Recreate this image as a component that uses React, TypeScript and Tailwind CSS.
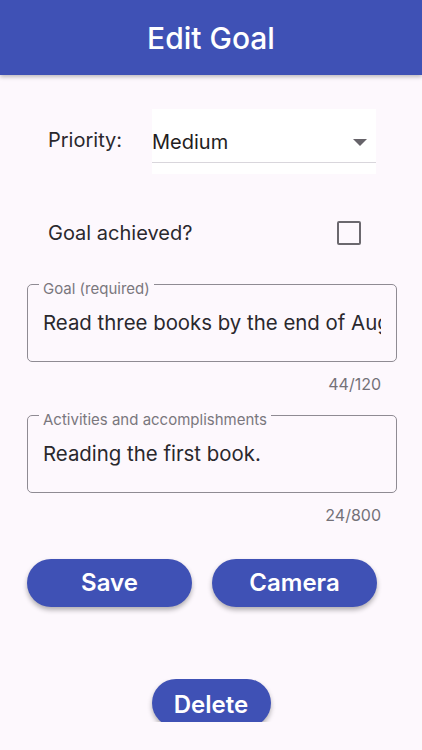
import React from "react";

const font = { fontFamily: "Inter, 'Noto Sans', sans-serif" };

function OutlinedField({ label, value, counter }: { label: string; value: string; counter: string }) {
  return (
    <div className="ml-[27px] w-[370px]">
      <div className="relative h-[78px] rounded-[5px] border border-[#8f8b93]">
        <span className="absolute left-[11px] top-[-5px] bg-[#fdf8fd] px-[4px] text-[15px] leading-[17px] text-[#7a777d]">
          {label}
        </span>
        <div className="px-[15px] pt-[24px]">
          <div className="overflow-hidden whitespace-nowrap text-[20.4px] leading-[28px] text-[#2a282d]">
            {value}
          </div>
        </div>
      </div>
      <div className="mt-[12px] h-[20px] pr-[16px] text-right text-[16px] leading-[20px] text-[#747178]">
        {counter}
      </div>
    </div>
  );
}

function PillButton({ children, className = "" }: { children: React.ReactNode; className?: string }) {
  return (
    <button
      className={
        "flex h-[48px] items-center justify-center rounded-full bg-[#3f51b5] text-[24px] font-semibold leading-none text-white shadow-[0_3px_5px_rgba(0,0,0,0.3)] " +
        className
      }
    >
      {children}
    </button>
  );
}

export default function App() {
  return (
    <div className="h-[750px] w-[422px] overflow-hidden bg-[#fdf8fd]" style={font}>
      <header className="relative z-10 flex h-[75px] items-center justify-center bg-[#3f51b5] shadow-[0_2px_4px_rgba(0,0,0,0.25)]">
        <h1 className="text-[30px] font-medium leading-none text-white">Edit Goal</h1>
      </header>

      <div className="h-[647px] overflow-hidden">
        {/* Priority row */}
        <div className="mt-[34px] flex items-start pl-[48px]">
          <div className="mt-[17px] w-[104px] text-[20px] leading-[28px] text-[#2a282d]">Priority:</div>
          <div className="h-[65px] w-[224px] bg-white">
            <div className="flex h-[54px] items-start border-b border-[#d9d6dc] pt-[19px]">
              <span className="flex-1 text-[20px] leading-[28px] text-[#1f1d22]">Medium</span>
              <span className="flex h-[28px] items-center pr-[9px]">
                <svg width="14" height="7" viewBox="0 0 14 7">
                  <polygon points="0,0 14,0 7,7" fill="#666369" />
                </svg>
              </span>
            </div>
          </div>
        </div>

        {/* Goal achieved row */}
        <div className="mt-[45px] flex h-[28px] items-center pl-[48px] pr-[61px]">
          <span className="flex-1 text-[20px] leading-[28px] text-[#2a282d]">Goal achieved?</span>
          <span className="block h-[24px] w-[24px] rounded-[2px] border-[2.5px] border-[#6b686e]" />
        </div>

        <div className="mt-[37px]">
          <OutlinedField label="Goal (required)" value="Read three books by the end of August." counter="44/120" />
        </div>
        <div className="mt-[21px]">
          <OutlinedField label="Activities and accomplishments" value="Reading the first book." counter="24/800" />
        </div>

        <div className="mt-[34px] flex gap-[20px] pl-[27px]">
          <PillButton className="w-[165px]">Save</PillButton>
          <PillButton className="w-[165px]">Camera</PillButton>
        </div>

        <div className="mt-[72px] flex h-[43px] justify-center overflow-hidden">
          <PillButton className="w-[119px] shrink-0 pt-[3px]">Delete</PillButton>
        </div>
      </div>
    </div>
  );
}
